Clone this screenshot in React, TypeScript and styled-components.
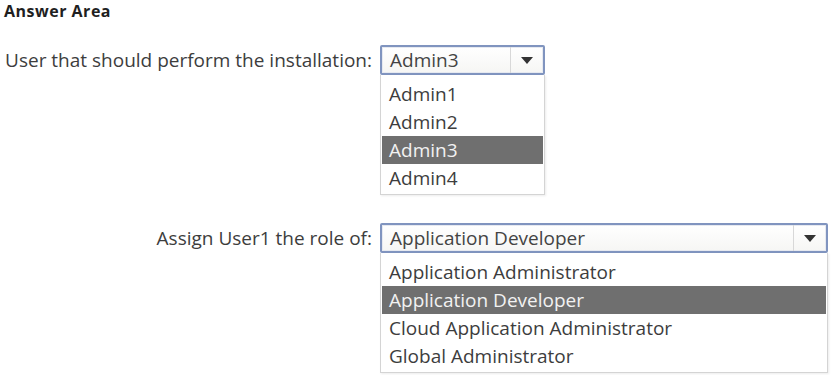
import styled, { createGlobalStyle } from "styled-components";

const GlobalStyle = createGlobalStyle`
  body {
    margin: 0;
    background: #ffffff;
    font-family: "Open Sans", "Noto Sans", sans-serif;
    color: #3a3a3a;
  }
`;

const Page = styled.div`
  width: 831px;
  height: 375px;
  overflow: hidden;
  padding: 0 0 0 4px;
  box-sizing: border-box;
`;

const Title = styled.div`
  font-weight: 700;
  font-size: 16px;
  line-height: 22px;
  color: #1f1f1f;
  letter-spacing: 0.5px;
`;

const Row = styled.div<{ $top: number }>`
  display: grid;
  grid-template-columns: 368px 1fr;
  column-gap: 8px;
  align-items: start;
  margin-top: ${(p) => p.$top}px;
`;

const Label = styled.div`
  text-align: right;
  font-size: 19px;
  line-height: 30px;
  white-space: nowrap;
  color: #3d3d3d;
`;

const Dropdown = styled.div<{ $width: number }>`
  width: ${(p) => p.$width}px;
  display: flex;
  flex-direction: column;
`;

const Select = styled.div`
  display: flex;
  align-items: center;
  height: 30px;
  box-sizing: border-box;
  border: 2px solid #8094bf;
  border-radius: 2px;
  background: linear-gradient(#ffffff, #f6f6f4);
  box-shadow: inset 0 0 0 1px #e6e9f0;
`;

const Value = styled.div`
  flex: 1;
  padding-left: 8px;
  font-size: 19px;
  color: #444;
  white-space: nowrap;
`;

const Arrow = styled.div`
  width: 32px;
  align-self: stretch;
  display: flex;
  align-items: center;
  justify-content: center;
  border-left: 1px solid #d8d8d8;
`;

const List = styled.div`
  border: 1px solid #d4d4d4;
  border-top: none;
  background: #fff;
  padding: 5px 1px 2px;
  box-shadow: 1px 1px 2px rgba(0, 0, 0, 0.08);
`;

const Item = styled.div<{ $active?: boolean }>`
  height: 28px;
  line-height: 28px;
  padding-left: 7px;
  font-size: 19px;
  white-space: nowrap;
  background: ${(p) => (p.$active ? "#6f6f6f" : "transparent")};
  color: ${(p) => (p.$active ? "#f2f2f2" : "#3d3d3d")};
`;

function Caret() {
  return (
    <svg width="12" height="7" viewBox="0 0 12 7">
      <path d="M0 0h12L6 7z" fill="#333" />
    </svg>
  );
}

type Field = {
  label: string;
  value: string;
  options: string[];
  width: number;
  top: number;
};

const fields: Field[] = [
  {
    label: "User that should perform the installation:",
    value: "Admin3",
    options: ["Admin1", "Admin2", "Admin3", "Admin4"],
    width: 165,
    top: 23,
  },
  {
    label: "Assign User1 the role of:",
    value: "Application Developer",
    options: [
      "Application Administrator",
      "Application Developer",
      "Cloud Application Administrator",
      "Global Administrator",
    ],
    width: 448,
    top: 28,
  },
];

export default function App() {
  return (
    <Page>
      <GlobalStyle />
      <Title>Answer Area</Title>
      {fields.map((f) => (
        <Row key={f.label} $top={f.top}>
          <Label>{f.label}</Label>
          <Dropdown $width={f.width}>
            <Select>
              <Value>{f.value}</Value>
              <Arrow>
                <Caret />
              </Arrow>
            </Select>
            <List>
              {f.options.map((o) => (
                <Item key={o} $active={o === f.value}>
                  {o}
                </Item>
              ))}
            </List>
          </Dropdown>
        </Row>
      ))}
    </Page>
  );
}
